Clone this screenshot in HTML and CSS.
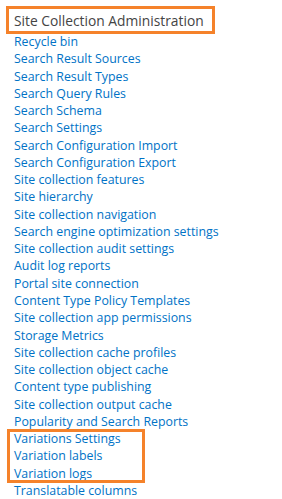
FILE: index.html
```html
<!DOCTYPE html>
<html lang="en">
<head>
    <meta charset="UTF-8">
    <title>Site Settings</title>
    <link rel="stylesheet" href="styles.css">
</head>
<body>
    <div class="section">
        <h3 class="section-title">Site Collection Administration</h3>
        <ul class="link-list">
            <li><a href="#">Recycle bin</a></li>
            <li><a href="#">Search Result Sources</a></li>
            <li><a href="#">Search Result Types</a></li>
            <li><a href="#">Search Query Rules</a></li>
            <li><a href="#">Search Schema</a></li>
            <li><a href="#">Search Settings</a></li>
            <li><a href="#">Search Configuration Import</a></li>
            <li><a href="#">Search Configuration Export</a></li>
            <li><a href="#">Site collection features</a></li>
            <li><a href="#">Site hierarchy</a></li>
            <li><a href="#">Site collection navigation</a></li>
            <li><a href="#">Search engine optimization settings</a></li>
            <li><a href="#">Site collection audit settings</a></li>
            <li><a href="#">Audit log reports</a></li>
            <li><a href="#">Portal site connection</a></li>
            <li><a href="#">Content Type Policy Templates</a></li>
            <li><a href="#">Site collection app permissions</a></li>
            <li><a href="#">Storage Metrics</a></li>
            <li><a href="#">Site collection cache profiles</a></li>
            <li><a href="#">Site collection object cache</a></li>
            <li><a href="#">Content type publishing</a></li>
            <li><a href="#">Site collection output cache</a></li>
            <li><a href="#">Popularity and Search Reports</a></li>
            <li class="highlight">
                <ul class="link-list">
                    <li><a href="#">Variations Settings</a></li>
                    <li><a href="#">Variation labels</a></li>
                    <li><a href="#">Variation logs</a></li>
                </ul>
            </li>
            <li><a href="#">Translatable columns</a></li>
        </ul>
    </div>
</body>
</html>
```

FILE: styles.css
```css
* { margin: 0; padding: 0; box-sizing: border-box; }
body {
    background: #fff;
    font-family: 'Open Sans', sans-serif;
    color: #444;
}
.section {
    padding: 6px 0 0 14px;
}
.section-title {
    display: inline-block;
    margin-left: -8px;
    width: 209px;
    height: 28px;
    padding: 0 0 0 5px;
    border: 3px solid #f5822a;
    font-size: 13.8px;
    font-weight: normal;
    line-height: 23px;
    color: #444;
    white-space: nowrap;
}
.link-list {
    list-style: none;
    margin-top: -1px;
}
.link-list li {
    font-size: 12.35px;
    line-height: 17.27px;
}
.link-list a {
    color: #0072c6;
    text-decoration: none;
    white-space: nowrap;
}
.highlight {
    margin-left: -6px;
    padding-left: 6px;
    width: 136px;
    outline: 3px solid #f5822a;
    outline-offset: -2px;
}
.highlight .link-list {
    margin-top: 0;
}
```
